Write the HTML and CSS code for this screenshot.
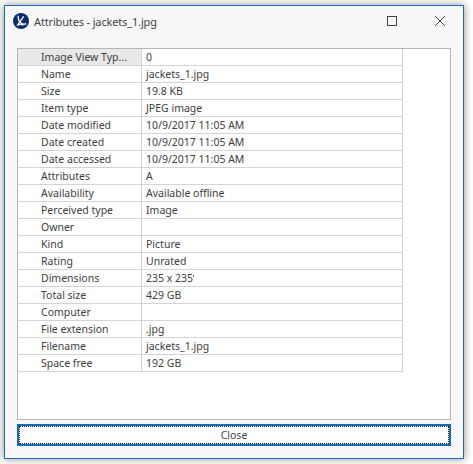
FILE: index.html
```html
<!DOCTYPE html>
<html lang="en">
<head>
<meta charset="utf-8">
<title>Attributes - jackets_1.jpg</title>
<link rel="stylesheet" href="styles.css">
</head>
<body>
<div class="window">
  <header class="titlebar">
    <svg class="logo" viewBox="0 0 16 16" width="16" height="16" aria-hidden="true">
      <circle cx="8" cy="8" r="8" fill="#0b2a6b"/>
      <path d="M5.2 2.8 C5 6.5 6.6 9.4 9 10.6 C10.4 11.3 12 11.4 13.2 10.6" fill="none" stroke="#fff" stroke-width="1.3"/>
      <path d="M10.6 3.2 C9.4 6 7 8.6 4.2 12.4 C6.6 11 8.6 10.8 10.4 12.2" fill="none" stroke="#fff" stroke-width="1.3"/>
    </svg>
    <span class="title">Attributes - jackets_1.jpg</span>
    <span class="win-btn max"><span class="max-box"></span></span>
    <span class="win-btn close">
      <svg viewBox="0 0 10 10" width="10" height="10" aria-hidden="true"><path d="M0 0l10 10M10 0L0 10" stroke="#444" stroke-width="1" fill="none"/></svg>
    </span>
  </header>
  <main class="content">
    <section class="panel">
      <table class="grid">
        <tbody>
          <tr class="first"><th>Image View Typ...</th><td>0</td></tr>
          <tr><th>Name</th><td>jackets_1.jpg</td></tr>
          <tr><th>Size</th><td>19.8 KB</td></tr>
          <tr><th>Item type</th><td>JPEG image</td></tr>
          <tr><th>Date modified</th><td>10/9/2017 11:05 AM</td></tr>
          <tr><th>Date created</th><td>10/9/2017 11:05 AM</td></tr>
          <tr><th>Date accessed</th><td>10/9/2017 11:05 AM</td></tr>
          <tr><th>Attributes</th><td>A</td></tr>
          <tr><th>Availability</th><td>Available offline</td></tr>
          <tr><th>Perceived type</th><td>Image</td></tr>
          <tr><th>Owner</th><td></td></tr>
          <tr><th>Kind</th><td>Picture</td></tr>
          <tr><th>Rating</th><td>Unrated</td></tr>
          <tr><th>Dimensions</th><td>235 x 235<span class="mark"></span></td></tr>
          <tr><th>Total size</th><td>429 GB</td></tr>
          <tr><th>Computer</th><td></td></tr>
          <tr><th>File extension</th><td>.jpg</td></tr>
          <tr><th>Filename</th><td>jackets_1.jpg</td></tr>
          <tr><th>Space free</th><td>192 GB</td></tr>
        </tbody>
      </table>
    </section>
    <button class="close-btn" type="button"><span class="focus">Close</span></button>
  </main>
</div>
</body>
</html>
```
FILE: styles.css
```css
* { box-sizing: border-box; }
html, body { margin: 0; height: 100%; background: #fff; }
body {
  width: 473px; height: 464px; overflow: hidden;
  padding: 5px 9px 5px 4px;
  font-family: "Noto Sans", sans-serif;
  font-size: 10.5px; color: #404040;
}
.window {
  width: 460px; height: 454px;
  display: flex; flex-direction: column;
  background: #f7f7f7;
  border: 1px solid #1a6bb5;
  box-shadow: 0 0 8px 0 rgba(0,0,0,.45);
}
.titlebar { height: 42px; display: flex; align-items: center; padding: 0 0 12px 8px; flex: none; }
.logo { flex: none; }
.title { margin-left: 5px; font-size: 11px; letter-spacing: -.15px; color: #444; flex: 1; }
.win-btn { display: flex; align-items: center; justify-content: center; flex: none; }
.max { width: 10px; margin-right: 38px; }
.max-box { width: 10px; height: 10px; border: 1px solid #444; display: block; }
.close { width: 10px; margin-right: 18px; }
.content { flex: 1; display: flex; flex-direction: column; padding: 0 12px 12px 12px; gap: 4px; }
.panel { flex: 1; background: #fff; border: 1px solid #b4b4b4; overflow: hidden; }
.grid { border-collapse: separate; border-spacing: 0; table-layout: fixed; width: 385px; }
.grid tr { height: 17px; }
.grid th, .grid td {
  padding: 0; height: 17px; line-height: 15px;
  font-weight: normal; text-align: left; white-space: nowrap;
  border-right: 1px solid #d4d4d4; border-bottom: 1px solid #d4d4d4;
}
.grid th { width: 124px; padding-left: 23px; }
.grid td { padding-left: 4px; }
.first th { background: #e8e8e8; }
.mark { display: inline-block; width: 1px; height: 2px; background: #555; vertical-align: 5px; }
.close-btn {
  height: 22px; padding: 0; flex: none;
  background: #fff; border: 2px solid #0f6cbd; border-radius: 0;
  font: inherit; color: #444;
}
.focus { display: block; height: 100%; line-height: 16px; border: 1px dotted #222; }
```
